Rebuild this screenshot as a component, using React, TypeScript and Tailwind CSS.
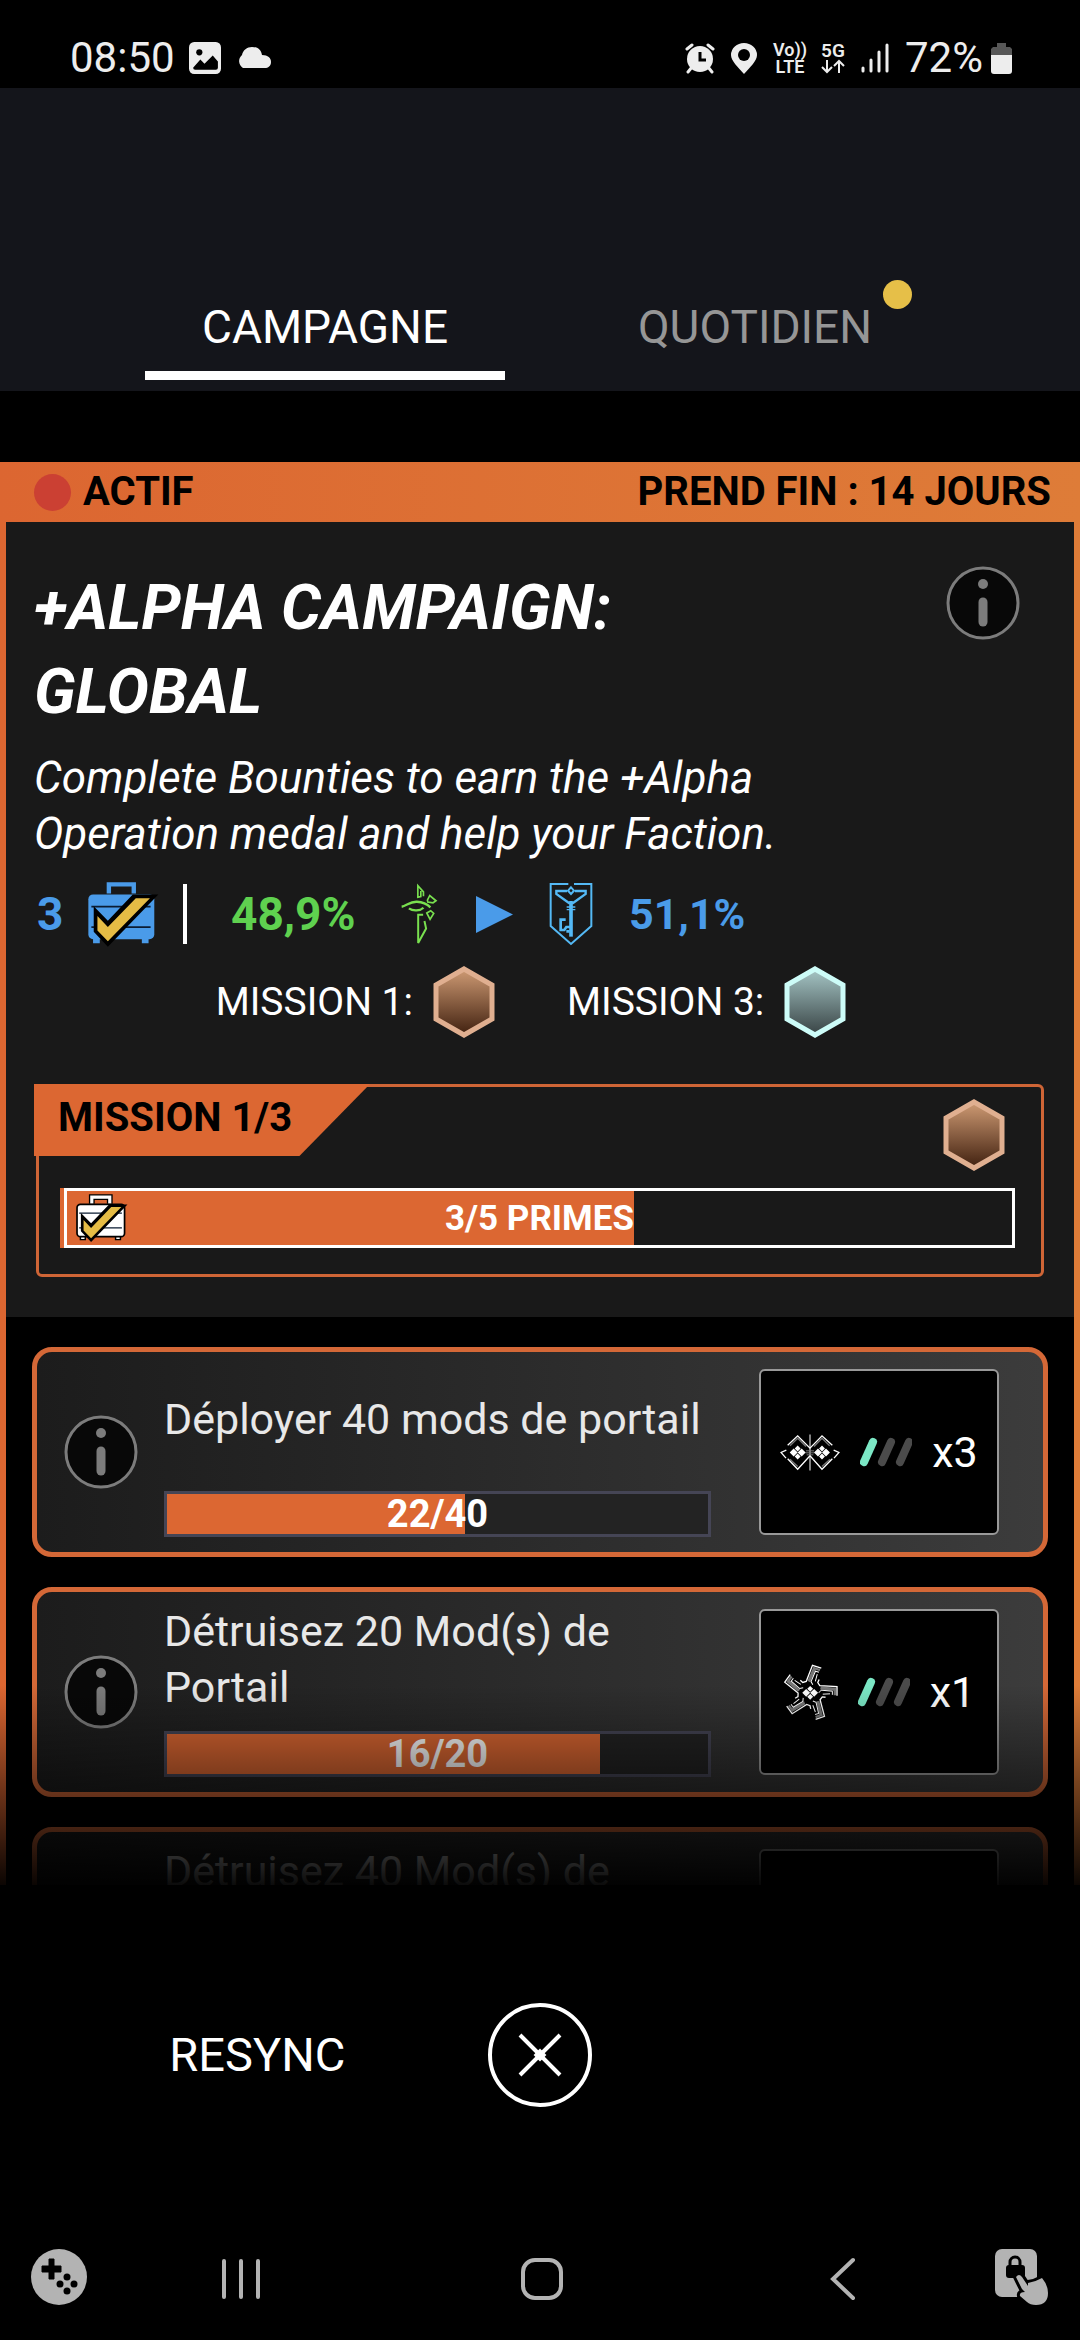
import React, { useState } from 'react';
import { clsx } from 'clsx';

type Reward = { icon: 'link' | 'turret'; amount: number };
type Bounty = { id: number; title: string; done: number; total: number; reward: Reward };

const BOUNTIES: Bounty[] = [
  { id: 1, title: 'Déployer 40 mods de portail', done: 22, total: 40, reward: { icon: 'link', amount: 3 } },
  { id: 2, title: 'Détruisez 20 Mod(s) de Portail', done: 16, total: 20, reward: { icon: 'turret', amount: 1 } },
  { id: 3, title: 'Détruisez 40 Mod(s) de Portail', done: 16, total: 40, reward: { icon: 'turret', amount: 2 } },
];

function Briefcase({ white, className }: { white?: boolean; className?: string }) {
  const fill = white ? '#ffffff' : '#4a9be9';
  const edge = white ? '#000000' : 'none';
  return (
    <svg viewBox="-4 -6 214 202" className={className} aria-hidden="true">
      {white && <path d="M61 34V7h74v27" fill="none" stroke="#000" strokeWidth="24" />}
      <path d="M61 34V7h74v27" fill="none" stroke={fill} strokeWidth="13" />
      <path d="M14 168h20v14H14zM159 168h20v14h-20z" fill={fill} stroke={edge} strokeWidth="6" />
      <rect x="0" y="37" width="196" height="133" rx="14" fill={fill} stroke={edge} strokeWidth="7" />
      <path d="M9 73h176M9 134h176" stroke="#0b1c33" strokeWidth="5" />
      <path d="M16 72l42 43 74-78h76L58 192 16 148z" fill="#000" />
      <path d="M27 101l31 33 83-86h42L58 176l-31-32z" fill="#e5bc45" />
    </svg>
  );
}

function Enlightened() {
  return (
    <svg viewBox="62 40 112 192" className="h-16 w-[37px]" fill="none" stroke="#79e04f" strokeWidth="6" aria-hidden="true">
      <path d="M130 82v-13l-17-19v35l9-2V66" strokeWidth="5" />
      <path d="M142 94l7-14 19 16-9 6-16-2z" strokeWidth="5" />
      <path d="M64 114c14-2 25-16 46-15s36 12 41 17" strokeWidth="7" />
      <path d="M86 119c12 9 34 8 44-2" strokeWidth="7" />
      <path d="M140 133l12-7 9 8-11 18z" strokeWidth="5" />
      <path d="M129 138h-15v86l24-44-5-23" />
    </svg>
  );
}

function Resistance() {
  return (
    <svg viewBox="508 40 132 192" className="h-16 w-11" fill="none" stroke="#54b9f5" strokeWidth="6" aria-hidden="true">
      <path d="M566 46h-53v126l61 54 61-54V46h-52" />
      <path d="M562 67h-32v9l38 27h12l38-27v-9h-32" strokeWidth="7" />
      <path d="M574 56l9 10-9 10-9-10z" />
      <path d="M574 97v107" strokeWidth="11" />
      <path d="M561 115h26M561 123h26" strokeWidth="4" />
      <path d="M558 153h-15v31h11l6-9h12M560 188h10" strokeWidth="8" />
    </svg>
  );
}

function Hex({ tone }: { tone: 'bronze' | 'silver' }) {
  const bronze = tone === 'bronze';
  const gradientId = `hex-${tone}`;
  return (
    <svg viewBox="0 0 62 72" className="h-[72px] w-[62px] shrink-0" aria-hidden="true">
      <defs>
        <linearGradient id={gradientId} x1="0" y1="0" x2="0" y2="1">
          <stop offset="0" stopColor={bronze ? '#cf9b74' : '#a6c6c6'} />
          <stop offset="1" stopColor={bronze ? '#40200f' : '#384344'} />
        </linearGradient>
      </defs>
      <path d="M31 3l28 16v34L31 69 3 53V19z" fill={`url(#${gradientId})`} stroke={bronze ? '#e0af90' : '#cdfcf8'} strokeWidth="5" />
    </svg>
  );
}

// Four small rhombi, shared by every mod glyph
function ModCore({ x, y }: { x: number; y: number }) {
  return (
    <g transform={`translate(${x} ${y})`} fill="#fff">
      <path d="M-12-9l9 9-9 9-9-9zM12-9l9 9-9 9-9-9zM0-18l6 6-6 6-6-6zM0 6l6 6-6 6-6-6z" />
    </g>
  );
}

function LinkModIcon() {
  return (
    <svg viewBox="0 0 180 110" className="h-[37px] w-[60px]" fill="none" stroke="#fff" strokeWidth="4" aria-hidden="true">
      <path d="M30 35l23-23 25 25M102 37l24-25 23 23M30 75l23 22M150 75l-24 22" stroke="#777" strokeWidth="4" />
      <path d="M23 33L53 5l37 37 36-37 31 28M23 74l30 31 37-40 36 40 31-31" />
      <path d="M19 48L3 55l15 17M161 48l16 7-15 17" />
      <path d="M90 1v108" strokeWidth="3" />
      <path d="M78 50h24M76 56h28M80 62h20" stroke="#777" strokeWidth="3" />
      <ModCore x={53} y={55} />
      <ModCore x={126} y={55} />
    </svg>
  );
}

function TurretModIcon() {
  return (
    <svg viewBox="0 0 166 170" className="h-[57px] w-[55px]" fill="none" stroke="#fff" strokeWidth="4" aria-hidden="true">
      {[0, 72, 144, 216, 288].map((angle) => (
        <g key={angle} transform={`translate(82 86) rotate(${angle})`}>
          <path d="M32-19l46 4v22h-7V-6l-41-4z" fill="#777" stroke="none" />
          <path d="M27-40l-4 9 6 9 52 3V9" />
          <path d="M26 0l7-8 34 3v11M38 4l22-1" strokeWidth="3" />
        </g>
      ))}
      <ModCore x={82} y={86} />
    </svg>
  );
}

function RarityBars() {
  return (
    <svg viewBox="0 0 52 30" className="h-[30px] w-[52px]" strokeWidth="8" strokeLinecap="round" aria-hidden="true">
      <path d="M4 25l9-20" stroke="#7be7c5" />
      <path d="M22 25l9-20M40 25l9-20" stroke="#4b4b4b" />
    </svg>
  );
}

function InfoButton({ label, className }: { label: string; className?: string }) {
  return (
    <button type="button" aria-label={label} className={clsx('shrink-0', className)}>
      <svg viewBox="0 0 74 74" className="h-[74px] w-[74px]" aria-hidden="true">
        <circle cx="37" cy="37" r="35" fill="#080808" stroke="#7c7c7c" strokeWidth="3" />
        <circle cx="37" cy="18" r="5" fill="#7c7c7c" />
        <path d="M37 36v20" stroke="#7c7c7c" strokeWidth="9" strokeLinecap="round" />
      </svg>
    </button>
  );
}

function StatusBar() {
  return (
    <div className="flex h-[88px] shrink-0 items-center justify-between pr-[68px] pl-[70px] pt-7 text-[#ededed]">
      <div className="flex items-center gap-[14px]">
        <span className="text-[42px] leading-none">08:50</span>
        <svg viewBox="0 0 31 31" className="h-8 w-8" aria-hidden="true">
          <rect width="31" height="31" rx="5" fill="#ededed" />
          <circle cx="10" cy="10" r="3" fill="#000" />
          <path d="M4 25l7-8 4 4 8-8 5 6v6q0 2-2 2H6q-2 0-2-2z" fill="#000" />
        </svg>
        <svg viewBox="0 0 36 22" className="h-[22px] w-9" fill="#ededed" aria-hidden="true">
          <path d="M8 21a8 8 0 0 1-1-13C8 3 12 0 17 0c6 0 9 3 10 8 6 0 9 3 9 7s-3 6-6 6z" />
        </svg>
      </div>
      <div className="flex items-center">
        <svg viewBox="0 0 30 31" className="mr-4 h-[31px] w-[30px]" aria-hidden="true">
          <path d="M7 24l-4 5M23 24l4 5M2 6l5-4M28 6l-5-4" stroke="#ededed" strokeWidth="3" strokeLinecap="round" />
          <circle cx="15" cy="16" r="13" fill="#ededed" />
          <path d="M15 9v8h6" fill="none" stroke="#000" strokeWidth="3" />
        </svg>
        <svg viewBox="0 0 26 31" className="mr-4 h-[31px] w-[26px]" aria-hidden="true">
          <path d="M13 31C7 24 0 18 0 12a13 12 0 0 1 26 0c0 6-7 12-13 19z" fill="#ededed" />
          <circle cx="13" cy="12" r="6" fill="#000" />
        </svg>
        <span className="mr-[14px] flex flex-col items-center text-[18px] leading-[17px] font-semibold">
          <span>Vo))</span>
          <span>LTE</span>
        </span>
        <span className="mr-4 flex flex-col items-center text-[19px] leading-[17px] font-semibold">
          <span>5G</span>
          <svg viewBox="0 0 24 15" className="h-[15px] w-6" fill="none" stroke="#ededed" strokeWidth="2" aria-hidden="true">
            <path d="M6 1v12M1 8l5 5 5-5M18 14V2M13 7l5-5 5 5" />
          </svg>
        </span>
        <svg viewBox="0 0 28 30" className="mr-4 h-[30px] w-7" stroke="#ededed" strokeWidth="3" strokeLinecap="round" aria-hidden="true">
          <path d="M2 28v-3M10 28V17M18 28V9M26 28V2" />
        </svg>
        <span className="mr-2 text-[42px] leading-none">72%</span>
        <svg viewBox="0 0 21 31" className="h-[31px] w-[21px]" aria-hidden="true">
          <path d="M6 0h9v4h4l2 2v6H0V6l2-2h4z" fill="#575757" />
          <path d="M0 12h21v16q0 3-3 3H3q-3 0-3-3z" fill="#ededed" />
        </svg>
      </div>
    </div>
  );
}

function Tabs() {
  const [tab, setTab] = useState<'campagne' | 'quotidien'>('campagne');
  const tabs = [
    { key: 'campagne', label: 'CAMPAGNE', badge: false },
    { key: 'quotidien', label: 'QUOTIDIEN', badge: true },
  ] as const;

  return (
    <header className="shrink-0 bg-[#14151b] px-[110px] pt-48 pb-[11px]">
      <div role="tablist" className="grid grid-cols-2">
        {tabs.map(({ key, label, badge }) => (
          <button
            key={key}
            type="button"
            role="tab"
            aria-selected={tab === key}
            onClick={() => setTab(key)}
            className={clsx(
              'mx-[35px] flex h-[100px] justify-center border-b-[9px] pt-5 text-[46px] leading-[54px]',
              tab === key ? 'border-white text-white' : 'border-transparent text-[#969696]'
            )}
          >
            <span className="relative">
              {label}
              {badge && <span className="absolute -top-5 -right-10 h-[29px] w-[29px] rounded-full bg-[#e6bf48]" />}
            </span>
          </button>
        ))}
      </div>
    </header>
  );
}

function BountyCard({ bounty }: { bounty: Bounty }) {
  const percent = (bounty.done / bounty.total) * 100;
  return (
    <li className="flex min-h-[210px] items-center rounded-[20px] border-[5px] border-[#d46837] bg-linear-to-r from-[#1c1c1c] to-[#3c3c3c] pr-11 pl-[27px]">
      <InfoButton label={`Détails : ${bounty.title}`} />
      <div className="ml-[26px] flex min-w-0 flex-1 flex-col pb-2">
        <h3 className="flex h-[120px] items-center text-[43px] leading-14 text-[#e8e8e8]">{bounty.title}</h3>
        <div
          role="progressbar"
          aria-label={bounty.title}
          aria-valuenow={bounty.done}
          aria-valuemax={bounty.total}
          className="relative mt-3 h-[46px] border-[3px] border-[#454555] bg-[#232323]"
        >
          <div className="h-full bg-[#dc6732]" style={{ width: `${percent}%` }} />
          <span className="absolute inset-0 flex items-center justify-center text-[38px] leading-none font-bold">
            {bounty.done}/{bounty.total}
          </span>
        </div>
      </div>
      <div className="ml-12 flex h-[166px] w-[240px] shrink-0 items-center justify-center gap-5 rounded-md border-2 border-[#999] bg-black">
        {bounty.reward.icon === 'link' ? <LinkModIcon /> : <TurretModIcon />}
        <RarityBars />
        <span className="text-[43px] leading-none">x{bounty.reward.amount}</span>
      </div>
    </li>
  );
}

function MissionBox() {
  return (
    <section className="mx-[30px] mt-[46px] rounded-md border-[3px] border-[#cf6536] pb-[26px]">
      <div className="flex items-start justify-between">
        <h2 className="-mt-[3px] -ml-[5px] h-[72px] w-[336px] bg-[#dc6732] pl-6 text-[40px] leading-[68px] font-bold text-black [clip-path:polygon(0_0,100%_0,79%_100%,0_100%)]">
          MISSION 1/3
        </h2>
        <div className="mt-3 mr-9">
          <Hex tone="bronze" />
        </div>
      </div>
      <div
        role="progressbar"
        aria-label="Primes"
        aria-valuenow={3}
        aria-valuemax={5}
        className="relative mt-[17px] mr-[26px] ml-[21px] h-[60px] border-l-4 border-[#dc6732]"
      >
        <div className="h-full border-[3px] border-white">
          <div className="h-full w-[60%] bg-[#dc6732]" />
        </div>
        <div className="absolute inset-0 flex items-center justify-center">
          <Briefcase white className="absolute left-3 h-[49px] w-[52px]" />
          <span className="text-[35px] leading-none font-bold">3/5 PRIMES</span>
        </div>
      </div>
    </section>
  );
}

function Campaign() {
  return (
    <section className="relative mt-[71px] min-h-0 flex-1 overflow-hidden bg-linear-to-r from-[#dc6631] to-[#de7c38] px-1.5">
      <div className="flex h-15 items-center justify-between pr-[23px] pl-7 text-[40px] leading-none font-bold text-black">
        <span className="flex items-center gap-3">
          <span className="h-[37px] w-[37px] rounded-full bg-[#cb4033]" />
          ACTIF
        </span>
        <span>PREND FIN : 14 JOURS</span>
      </div>

      <div className="bg-[#191919] pt-11 pb-10">
        <div className="flex items-start justify-between pr-[54px] pl-7">
          <h1 className="w-[680px] text-[63px] leading-[84px] font-bold italic">+ALPHA CAMPAIGN: GLOBAL</h1>
          <InfoButton label="Détails de la campagne" />
        </div>
        <p className="mt-4 w-[820px] pl-7 text-[44px] leading-14 italic">
          Complete Bounties to earn the +Alpha Operation medal and help your Faction.
        </p>

        <div className="mt-4 flex h-[72px] items-center pl-[31px] text-[46px] leading-none font-bold text-[#4a9be9]">
          <span className="w-[50px]">3</span>
          <Briefcase className="h-[68px] w-[72px]" />
          <span className="ml-6 h-15 w-1 bg-white" />
          <span className="ml-11 w-[170px] text-[#5fd14f]">48,9%</span>
          <Enlightened />
          <svg viewBox="0 0 37 37" className="ml-[38px] h-[37px] w-[37px]" fill="#4a9be9" aria-hidden="true">
            <path d="M0 0l37 18.500L0 37z" />
          </svg>
          <div className="ml-9">
            <Resistance />
          </div>
          <span className="ml-9 text-[43px]">51,1%</span>
        </div>

        <div className="mt-4 flex items-center justify-center gap-[72px] pr-[18px] text-[39px] leading-none">
          <span className="flex items-center gap-5">
            MISSION 1: <Hex tone="bronze" />
          </span>
          <span className="flex items-center gap-5">
            MISSION 3: <Hex tone="silver" />
          </span>
        </div>

        <MissionBox />
      </div>

      <ul className="flex flex-col gap-[30px] bg-black px-[26px] pt-[30px] pb-[30px]">
        {BOUNTIES.map((bounty) => (
          <BountyCard key={bounty.id} bounty={bounty} />
        ))}
      </ul>

      <div className="pointer-events-none absolute inset-x-0 bottom-0 h-[200px] bg-linear-to-b from-transparent to-black/95" />
    </section>
  );
}

function NavBar() {
  return (
    <nav className="flex h-[126px] shrink-0 items-center px-[31px]">
      <button type="button" aria-label="Jeux" className="w-[59px]">
        <svg viewBox="0 0 56 56" className="h-14 w-14" aria-hidden="true">
          <circle cx="28" cy="28" r="28" fill="#b3b3b3" />
          <path d="M18 10h5v7h7v6h-7v7h-5v-7h-7v-6h7z" fill="#000" stroke="#000" strokeWidth="1" />
          <g fill="#000">
            <circle cx="36" cy="28" r="3.500" />
            <circle cx="36" cy="42" r="3.500" />
            <circle cx="29" cy="35" r="3.500" />
            <circle cx="43" cy="35" r="3.500" />
          </g>
        </svg>
      </button>
      <div className="grid flex-1 grid-cols-3 justify-items-center pt-1">
        <button type="button" aria-label="Applications récentes">
          <svg viewBox="0 0 40 42" className="h-[42px] w-10" stroke="#b3b3b3" strokeWidth="4" strokeLinecap="round" aria-hidden="true">
            <path d="M3 3v36M20 3v36M37 3v36" />
          </svg>
        </button>
        <button type="button" aria-label="Accueil">
          <svg viewBox="0 0 42 42" className="h-[42px] w-[42px]" fill="none" stroke="#b3b3b3" strokeWidth="4" aria-hidden="true">
            <rect x="2" y="2" width="38" height="38" rx="12" />
          </svg>
        </button>
        <button type="button" aria-label="Retour">
          <svg viewBox="0 0 26 44" className="h-11 w-[26px]" fill="none" stroke="#b3b3b3" strokeWidth="4" strokeLinecap="round" aria-hidden="true">
            <path d="M23 3L3 22l20 19" />
          </svg>
        </button>
      </div>
      <button type="button" aria-label="Verrouillage tactile" className="w-[55px]">
        <svg viewBox="0 0 55 56" className="h-14 w-[55px]" aria-hidden="true">
          <rect x="1" y="0" width="42" height="48" rx="7" fill="#b3b3b3" />
          <rect x="12" y="16" width="19" height="13" rx="3" fill="#000" />
          <path d="M16 17v-4a5 5 0 0 1 10 0v4" fill="none" stroke="#000" strokeWidth="3" />
          <path
            d="M22 28q3-4 6 0l6 9v-3q7-1 14-5 6 7 6 15 0 12-12 12-6 0-9-3l-7-6q-1-4 5-4l-3-3z"
            fill="#b3b3b3"
            stroke="#000"
            strokeWidth="6"
            strokeLinejoin="round"
            paintOrder="stroke"
          />
        </svg>
      </button>
    </nav>
  );
}

export default function App() {
  return (
    <div className="flex h-screen flex-col bg-black font-['Roboto',sans-serif] text-white">
      <StatusBar />
      <Tabs />
      <Campaign />

      <footer className="grid h-[329px] shrink-0 grid-cols-3 items-center px-[116px] pt-[10px]">
        <button type="button" className="text-[47px] leading-none">
          RESYNC
        </button>
        <button type="button" aria-label="Fermer" className="justify-self-center">
          <svg viewBox="0 0 104 104" className="h-[104px] w-[104px]" fill="none" stroke="#fff" aria-hidden="true">
            <circle cx="52" cy="52" r="50" strokeWidth="4" />
            <path d="M32 32l40 40M72 32L32 72" strokeWidth="4" />
            <path d="M52 47l5 5-5 5-5-5z" fill="#fff" strokeWidth="2" />
          </svg>
        </button>
      </footer>

      <NavBar />
    </div>
  );
}
